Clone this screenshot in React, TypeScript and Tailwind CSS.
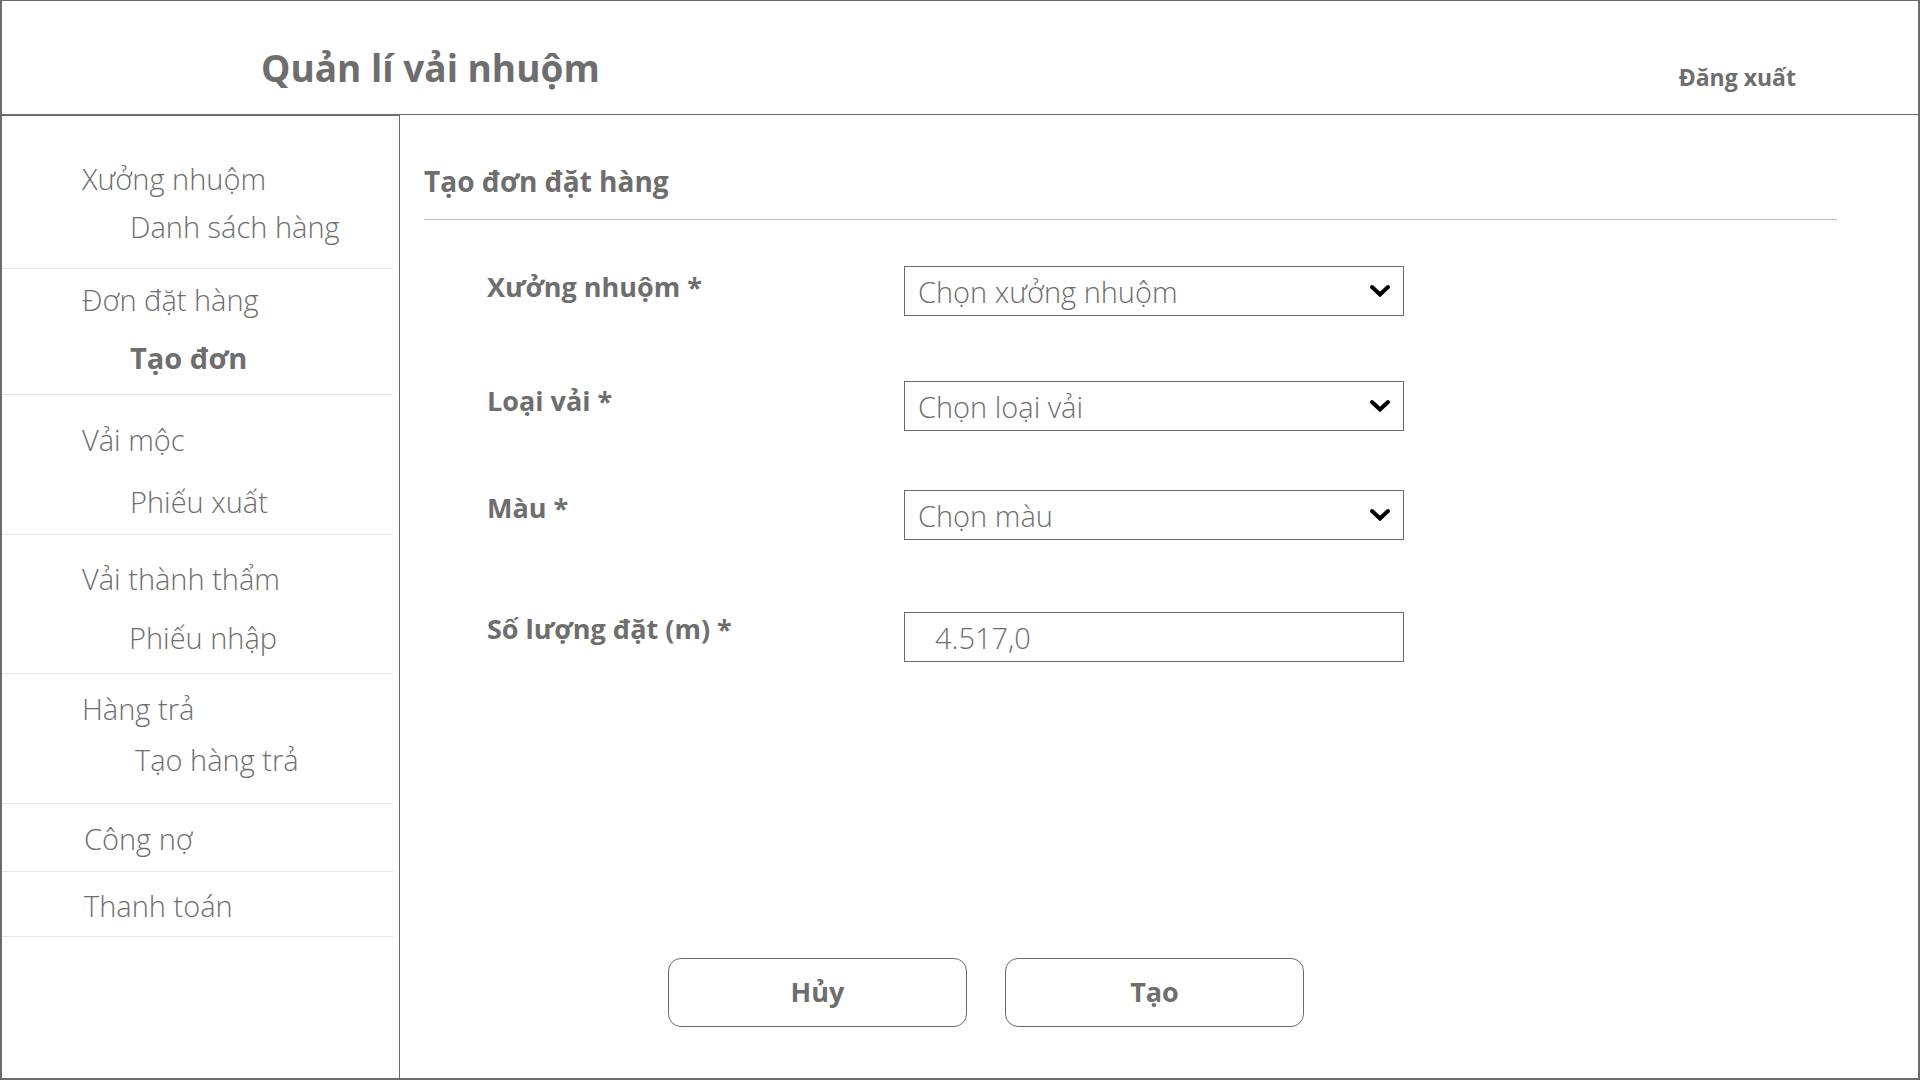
import React from "react";

const font = { fontFamily: '"Open Sans", "Noto Sans", sans-serif' };

type Group = {
  title: string;
  sub?: string;
  active?: boolean;
  box: string;
  titleCls: string;
  subCls?: string;
};

const groups: Group[] = [
  { title: "Xưởng nhuộm", sub: "Danh sách hàng", box: "pt-[45px] pb-[23px]", titleCls: "pl-[80px]", subCls: "pl-[128px] mt-[12px]" },
  { title: "Đơn đặt hàng", sub: "Tạo đơn", active: true, box: "pt-[13px] pb-[18px]", titleCls: "pl-[80px]", subCls: "pl-[128px] mt-[22px]" },
  { title: "Vải mộc", sub: "Phiếu xuất", box: "pt-[27px] pb-[14px]", titleCls: "pl-[80px]", subCls: "pl-[128px] mt-[26px]" },
  { title: "Vải thành thẩm", sub: "Phiếu nhập", box: "pt-[26px] pb-[17px]", titleCls: "pl-[80px]", subCls: "pl-[127px] mt-[23px]" },
  { title: "Hàng trả", sub: "Tạo hàng trả", box: "pt-[17px] pb-[25px]", titleCls: "pl-[80px]", subCls: "pl-[133px] mt-[15px]" },
  { title: "Công nợ", box: "pt-[17px] pb-[14px]", titleCls: "pl-[82px]" },
  { title: "Thanh toán", box: "pt-[16px] pb-[12px]", titleCls: "pl-[82px]" },
];

function Chevron() {
  return (
    <svg width="22" height="14" viewBox="0 0 22 14" className="shrink-0">
      <path d="M3 3 L11 10.5 L19 3" fill="none" stroke="#000" strokeWidth="4" strokeLinecap="round" strokeLinejoin="miter" />
    </svg>
  );
}

function SelectBox({ placeholder }: { placeholder: string }) {
  return (
    <div className="w-[500px] h-[50px] border border-[#6b6b6b] flex items-center justify-between pl-[13px] pr-[12px] bg-white">
      <span className="text-[29px] font-light text-[#6e6e6e] leading-none">{placeholder}</span>
      <Chevron />
    </div>
  );
}

function FormRow({ label, children, cls, labelCls }: { label: string; children: React.ReactNode; cls: string; labelCls: string }) {
  return (
    <div className={`flex items-center ${cls}`}>
      <div className={`w-[480px] pl-[63px] ${labelCls} text-[27px] font-bold text-[#6e6e6e] leading-none`}>{label}</div>
      {children}
    </div>
  );
}

export default function App() {
  return (
    <div style={font} className="w-[1920px] h-[1080px] bg-white border-t border-x-2 border-b-2 border-[#6b6b6b] flex flex-col overflow-hidden">
      <header className="h-[114px] shrink-0 border-b border-[#6b6b6b] flex items-center">
        <h1 className="pl-[259px] mt-[19px] text-[37px] font-bold text-[#6e6e6e] leading-none">Quản lí vải nhuộm</h1>
        <div className="ml-auto mr-[122px] mt-[40px] text-[23px] font-bold text-[#6e6e6e] leading-none">Đăng xuất</div>
      </header>

      <div className="flex flex-1 min-h-0">
        <aside className="w-[398px] shrink-0 border-t border-r border-[#6b6b6b]">
          {groups.map((g) => (
            <div key={g.title} className={`${g.box} border-b border-[#e6e6e6] mr-[6px]`}>
              <div className={`${g.titleCls} h-[36px] flex items-center text-[29px] font-light text-[#6e6e6e]`}>{g.title}</div>
              {g.sub && (
                <div
                  className={`${g.subCls} h-[36px] flex items-center text-[29px] text-[#6e6e6e] ${
                    g.active ? "font-bold" : "font-light"
                  }`}
                >
                  {g.sub}
                </div>
              )}
            </div>
          ))}
        </aside>

        <main className="flex-1 pl-[24px] pr-[81px]">
          <div className="h-[105px] flex items-end pb-[24px] border-b border-[#bdbdbd]">
            <h2 className="text-[28px] font-bold text-[#6e6e6e] leading-none">Tạo đơn đặt hàng</h2>
          </div>

          <FormRow label="Xưởng nhuộm *" cls="mt-[46px]" labelCls="pb-[9px]">
            <SelectBox placeholder="Chọn xưởng nhuộm" />
          </FormRow>
          <FormRow label="Loại vải *" cls="mt-[65px]" labelCls="pb-[11px]">
            <SelectBox placeholder="Chọn loại vải" />
          </FormRow>
          <FormRow label="Màu *" cls="mt-[59px]" labelCls="pb-[16px]">
            <SelectBox placeholder="Chọn màu" />
          </FormRow>
          <FormRow label="Số lượng đặt (m) *" cls="mt-[72px]" labelCls="pb-[18px]">
            <div className="w-[500px] h-[50px] border border-[#6b6b6b] flex items-center pl-[30px] bg-white">
              <span className="text-[29px] font-light text-[#6e6e6e] leading-none">4.517,0</span>
            </div>
          </FormRow>

          <div className="mt-[296px] pl-[244px] flex gap-[38px]">
            <button className="w-[299px] h-[69px] rounded-[13px] border border-[#6b6b6b] bg-white text-[27px] font-bold text-[#6e6e6e]">
              Hủy
            </button>
            <button className="w-[299px] h-[69px] rounded-[13px] border border-[#6b6b6b] bg-white text-[27px] font-bold text-[#6e6e6e]">
              Tạo
            </button>
          </div>
        </main>
      </div>
    </div>
  );
}
